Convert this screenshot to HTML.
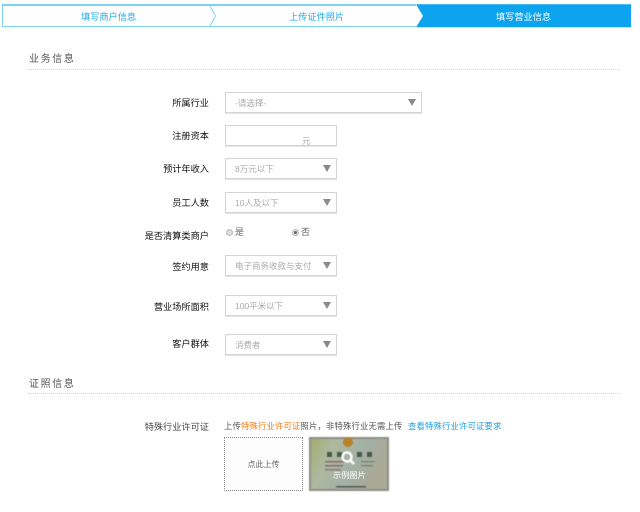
<!DOCTYPE html>
<html><head><meta charset="utf-8">
<style>
html,body{margin:0;padding:0;background:#fff;width:640px;height:512px;overflow:hidden}
body{position:relative;font-family:"Liberation Sans","Noto Sans CJK SC",sans-serif;color:#444}
#w{position:absolute;left:0;top:0;width:640px;height:512px;filter:blur(.35px)}
.a{position:absolute;white-space:nowrap}
.l{position:absolute;right:431px;font-size:9.2px;line-height:14px;color:#111;white-space:nowrap}
.h{position:absolute;left:29px;font-size:10px;line-height:14px;letter-spacing:1.6px;color:#555}
.d{position:absolute;left:28px;width:592px;height:0;border-top:1px dotted #d4d4d4}
.s{position:absolute;box-sizing:border-box;border:1px solid #d4d4d4;background:#fff;box-shadow:0 1px 0 #e4e4e4;left:225px;width:112px;height:21px;font-size:8.5px;line-height:20px;color:#aaa;padding-left:9px;white-space:nowrap}
.s i{position:absolute;right:5px;top:6px;width:0;height:0;border-left:4.5px solid transparent;border-right:4.5px solid transparent;border-top:7px solid #8a8a8a}
.r{position:absolute;width:7px;height:7px;border-radius:50%;box-sizing:border-box;border:1px solid #bbb;background:#ddd}
</style></head><body><div id="w">

<svg class="a" style="left:0;top:0" width="640" height="30">
<path d="M2 5H423V27H2Z" fill="#fff"/>
<path d="M416 4.300H631V27.300H416L423 16Z" fill="#0ca4ee"/>
<path d="M2.500 5V26.500H416" fill="none" stroke="#7fd3f2" stroke-width="1"/>
<path d="M2 5H416" fill="none" stroke="#7fd3f2" stroke-width="2"/>
<path d="M209.500 5L215.500 16L209.500 27" fill="none" stroke="#7fd3f2" stroke-width="1"/>
</svg>
<div class="a" style="left:81px;top:10px;font-size:9.2px;line-height:14px;color:#1fa9e8">填写商户信息</div>
<div class="a" style="left:289px;top:10px;font-size:9.2px;line-height:14px;color:#1fa9e8">上传证件照片</div>
<div class="a" style="left:496px;top:10px;font-size:9.2px;line-height:14px;color:#fff">填写营业信息</div>

<div class="h" style="top:53px">业务信息</div>
<div class="d" style="top:69px"></div>

<div class="l" style="top:96px">所属行业</div>
<div class="s" style="top:92px;width:197px">-请选择-<i></i></div>

<div class="l" style="top:129px">注册资本</div>
<div class="s" style="top:125px"><span class="a" style="left:76px;top:5px;line-height:20px">元</span></div>

<div class="l" style="top:162px">预计年收入</div>
<div class="s" style="top:158px">8万元以下<i></i></div>

<div class="l" style="top:196px">员工人数</div>
<div class="s" style="top:192px">10人及以下<i></i></div>

<div class="l" style="top:229px">是否清算类商户</div>
<div class="r" style="left:226px;top:229px"></div>
<div class="a" style="left:235px;top:226px;font-size:9px;line-height:13px;color:#666">是</div>
<div class="r" style="left:292px;top:229px;background:#666;box-shadow:inset 0 0 0 1px #eee"></div>
<div class="a" style="left:301px;top:226px;font-size:9px;line-height:13px;color:#666">否</div>

<div class="l" style="top:260px">签约用意</div>
<div class="s" style="top:255px">电子商务收款与支付<i></i></div>

<div class="l" style="top:300px">营业场所面积</div>
<div class="s" style="top:295px">100平米以下<i></i></div>

<div class="l" style="top:337px">客户群体</div>
<div class="s" style="top:334px">消费者<i></i></div>

<div class="h" style="top:378px">证照信息</div>
<div class="d" style="top:393px"></div>

<div class="l" style="top:420px;color:#444">特殊行业许可证</div>
<div class="a" style="left:224px;top:420px;font-size:8.3px;line-height:12px;color:#555;letter-spacing:.2px">上传<span style="color:#f07d1a">特殊行业许可证</span>照片，非特殊行业无需上传</div>
<div class="a" style="left:408px;top:420px;font-size:8.3px;line-height:12px;color:#1fa0dc;letter-spacing:.2px">查看特殊行业许可证要求</div>

<div class="a" style="left:224px;top:437px;width:79px;height:54px;box-sizing:border-box;border:1px dotted #888;text-align:center;font-size:8px;line-height:53px;color:#666;background:#fdfdfd">点此上传</div>

<svg class="a" style="left:309px;top:437px;filter:blur(.5px)" width="80" height="54" viewBox="0 0 80 54">
<defs><linearGradient id="g" x1="0" x2="1" y1="0" y2="0.3"><stop offset="0" stop-color="#a2ae70"/><stop offset=".3" stop-color="#adb8a0"/><stop offset=".7" stop-color="#a3b0a6"/><stop offset="1" stop-color="#aaa995"/></linearGradient></defs>
<rect width="80" height="54" fill="#8f8f86"/>
<rect x="2" y="2" width="76" height="50" fill="url(#g)"/>
<circle cx="39" cy="5" r="5" fill="#b5822a"/>
<rect x="18" y="15" width="5" height="5" fill="#4a5a4a"/><rect x="28" y="15" width="5" height="5" fill="#4a5a4a"/><rect x="48" y="15" width="5" height="5" fill="#4a5a4a"/><rect x="58" y="15" width="5" height="5" fill="#4a5a4a"/>
<rect x="16" y="24" width="20" height="1.500" fill="#8a6a6a"/><rect x="16" y="28" width="18" height="1.500" fill="#8a6a6a"/><rect x="16" y="32" width="16" height="1.500" fill="#8a7a7a"/>
<rect x="52" y="24" width="14" height="1.500" fill="#7a8a7a"/><rect x="52" y="28" width="12" height="1.500" fill="#7a8a7a"/>
<rect x="27" y="49" width="30" height="1.500" fill="#555"/>
<circle cx="38" cy="20" r="4.500" fill="none" stroke="#fff" stroke-width="2.400"/>
<path d="M41.500 23.500L45 27" stroke="#fff" stroke-width="2.600"/>
</svg>
<div class="a" style="left:333px;top:470px;font-size:8.200px;line-height:12px;color:#fff">示例图片</div>
</div></body></html>
